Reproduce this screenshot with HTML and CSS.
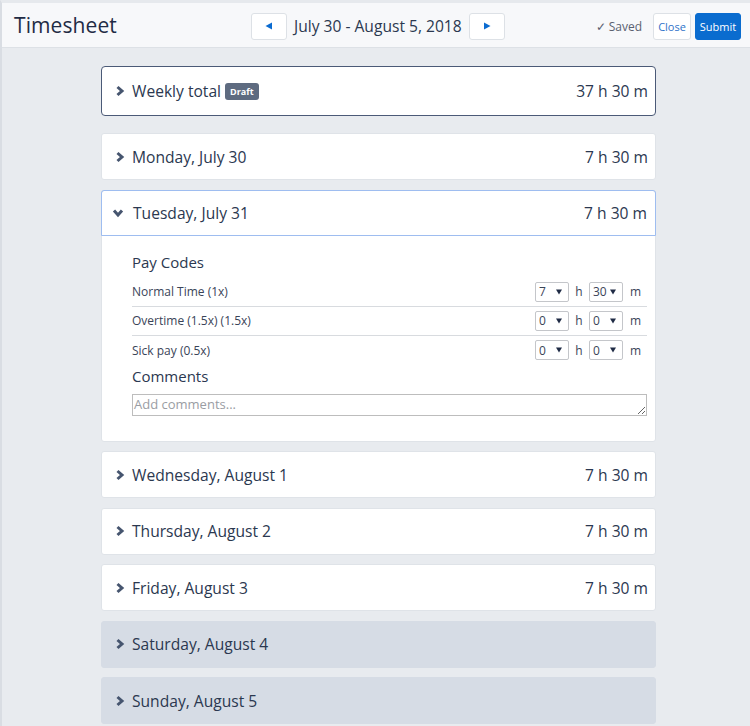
FILE: index.html
```html
<!DOCTYPE html>
<html lang="en">
<head>
<meta charset="utf-8">
<title>Timesheet</title>
<link rel="stylesheet" href="styles.css">
</head>
<body>
<div class="frame">
  <header class="topbar">
    <h1 class="title">Timesheet</h1>
    <div class="datenav">
      <button class="navbtn" aria-label="Previous week"><svg width="8" height="8" viewBox="0 0 8 8"><path d="M7 0.5 L0.5 4 L7 7.5 Z" fill="#0b6bd0"/></svg></button>
      <span class="range">July 30 - August 5, 2018</span>
      <button class="navbtn" aria-label="Next week"><svg width="8" height="8" viewBox="0 0 8 8"><path d="M1 0.5 L7.5 4 L1 7.5 Z" fill="#0b6bd0"/></svg></button>
    </div>
    <div class="actions">
      <span class="saved">✓ Saved</span>
      <button class="btn btn-close">Close</button>
      <button class="btn btn-submit">Submit</button>
    </div>
  </header>

  <main class="list">
    <section class="card card-total">
      <div class="card-head">
        <svg class="chev" width="10" height="12" viewBox="0 0 10 12"><path d="M2.5 2 L7 6 L2.5 10" fill="none" stroke="#46556f" stroke-width="3"/></svg>
        <span class="day">Weekly total</span><span class="badge">Draft</span>
        <span class="hours">37 h 30 m</span>
      </div>
    </section>

    <section class="card">
      <div class="card-head">
        <svg class="chev" width="10" height="12" viewBox="0 0 10 12"><path d="M2.5 2 L7 6 L2.5 10" fill="none" stroke="#46556f" stroke-width="3"/></svg>
        <span class="day">Monday, July 30</span>
        <span class="hours">7 h 30 m</span>
      </div>
    </section>

    <section class="card card-open">
      <div class="card-head head-open">
        <svg class="chev chev-down" width="12" height="10" viewBox="0 0 12 10"><path d="M2 2.5 L6 7 L10 2.5" fill="none" stroke="#46556f" stroke-width="3"/></svg>
        <span class="day">Tuesday, July 31</span>
        <span class="hours">7 h 30 m</span>
      </div>
      <div class="card-body">
        <h2 class="sub">Pay Codes</h2>
        <div class="rows">
          <div class="row">
            <span class="code">Normal Time (1x)</span>
            <span class="sel"><span>7</span><svg width="6" height="6" viewBox="0 0 6 6"><path d="M0 0.5 H6 L3 5.5 Z" fill="#1f2b45"/></svg></span><span class="unit">h</span>
            <span class="sel"><span>30</span><svg width="6" height="6" viewBox="0 0 6 6"><path d="M0 0.5 H6 L3 5.5 Z" fill="#1f2b45"/></svg></span><span class="unit unit-m">m</span>
          </div>
          <div class="row">
            <span class="code">Overtime (1.5x) (1.5x)</span>
            <span class="sel"><span>0</span><svg width="6" height="6" viewBox="0 0 6 6"><path d="M0 0.5 H6 L3 5.5 Z" fill="#1f2b45"/></svg></span><span class="unit">h</span>
            <span class="sel"><span>0</span><svg width="6" height="6" viewBox="0 0 6 6"><path d="M0 0.5 H6 L3 5.5 Z" fill="#1f2b45"/></svg></span><span class="unit unit-m">m</span>
          </div>
          <div class="row last">
            <span class="code">Sick pay (0.5x)</span>
            <span class="sel"><span>0</span><svg width="6" height="6" viewBox="0 0 6 6"><path d="M0 0.5 H6 L3 5.5 Z" fill="#1f2b45"/></svg></span><span class="unit">h</span>
            <span class="sel"><span>0</span><svg width="6" height="6" viewBox="0 0 6 6"><path d="M0 0.5 H6 L3 5.5 Z" fill="#1f2b45"/></svg></span><span class="unit unit-m">m</span>
          </div>
        </div>
        <h2 class="sub sub-comments">Comments</h2>
        <textarea class="comments" placeholder="Add comments..."></textarea>
      </div>
    </section>

    <section class="card">
      <div class="card-head">
        <svg class="chev" width="10" height="12" viewBox="0 0 10 12"><path d="M2.5 2 L7 6 L2.5 10" fill="none" stroke="#46556f" stroke-width="3"/></svg>
        <span class="day">Wednesday, August 1</span>
        <span class="hours">7 h 30 m</span>
      </div>
    </section>

    <section class="card">
      <div class="card-head">
        <svg class="chev" width="10" height="12" viewBox="0 0 10 12"><path d="M2.5 2 L7 6 L2.5 10" fill="none" stroke="#46556f" stroke-width="3"/></svg>
        <span class="day">Thursday, August 2</span>
        <span class="hours">7 h 30 m</span>
      </div>
    </section>

    <section class="card">
      <div class="card-head">
        <svg class="chev" width="10" height="12" viewBox="0 0 10 12"><path d="M2.5 2 L7 6 L2.5 10" fill="none" stroke="#46556f" stroke-width="3"/></svg>
        <span class="day">Friday, August 3</span>
        <span class="hours">7 h 30 m</span>
      </div>
    </section>

    <section class="card card-off">
      <div class="card-head">
        <svg class="chev" width="10" height="12" viewBox="0 0 10 12"><path d="M2.5 2 L7 6 L2.5 10" fill="none" stroke="#46556f" stroke-width="3"/></svg>
        <span class="day">Saturday, August 4</span>
      </div>
    </section>

    <section class="card card-off">
      <div class="card-head">
        <svg class="chev" width="10" height="12" viewBox="0 0 10 12"><path d="M2.5 2 L7 6 L2.5 10" fill="none" stroke="#46556f" stroke-width="3"/></svg>
        <span class="day">Sunday, August 5</span>
      </div>
    </section>
  </main>
</div>
</body>
</html>
```

FILE: styles.css
```css
* { box-sizing: border-box; }

html, body {
  margin: 0;
  padding: 0;
  height: 100%;
}

body {
  font-family: "Open Sans", "Noto Sans", "Liberation Sans", sans-serif;
  background: #e8ebef;
  color: #2b3850;
  overflow: hidden;
}

.frame {
  min-height: 100%;
  border-left: 2px solid #d9dde3;
  border-top: 3px solid #e6e9ed;
  background: #e8ebef;
}

.topbar {
  height: 45px;
  background: #f7f8fa;
  border-bottom: 1px solid #dde1e6;
  display: flex;
  align-items: center;
  padding: 0 9px 0 12px;
}

.title {
  margin: 0;
  font-size: 21px;
  font-weight: 400;
  color: #1f2b45;
  width: 237px;
  letter-spacing: 0.1px;
}

.datenav {
  display: flex;
  align-items: center;
  gap: 7px;
  margin-top: 2px;
}

.navbtn {
  width: 36px;
  height: 27px;
  background: #fff;
  border: 1px solid #dde1e6;
  border-radius: 3px;
  display: flex;
  align-items: center;
  justify-content: center;
  padding: 0;
}

.range {
  font-size: 15.6px;
  color: #2b3850;
  padding: 0;
}

.actions {
  margin-left: auto;
  display: flex;
  align-items: center;
  margin-top: 2px;
}

.saved {
  font-size: 12px;
  color: #5a6170;
  margin-right: 11px;
}

.btn {
  height: 27px;
  border-radius: 3px;
  font-family: inherit;
  font-size: 11px;
  padding: 0 3px;
  border: 1px solid #dde1e6;
}

.btn-close {
  background: #fff;
  color: #2f72c9;
  margin-right: 4px;
  width: 38px;
}

.btn-submit {
  background: #0a6ccf;
  border-color: #0a6ccf;
  color: #fff;
  width: 46px;
}

.list {
  width: 555px;
  margin: 18px 0 0 99px;
  display: flex;
  flex-direction: column;
  gap: 9.5px;
}

.card {
  background: #fff;
  border: 1px solid #dfe3e8;
  border-radius: 3px;
}

.card-head {
  display: flex;
  align-items: center;
  height: 45px;
  padding: 0 7px 0 13px;
  font-size: 15.6px;
  color: #2b3850;
}

.chev {
  margin-right: 7px;
  flex: none;
}

.chev-down {
  margin-left: -4px;
  margin-right: 9px;
}

.day {
  flex: none;
}

.hours {
  margin-left: auto;
}

.card-total {
  border-color: #4b5a77;
  border-radius: 4px;
  margin-bottom: 7.5px;
}

.card-total .card-head {
  height: 48px;
}

.badge {
  background: #5e6b80;
  color: #fff;
  font-size: 9px;
  font-weight: 700;
  border-radius: 3px;
  padding: 2px 5px;
  margin-left: 4px;
  line-height: 13px;
}

.card-open {
  border-color: #dfe3e8;
}

.head-open {
  border: 1px solid #9ebdf0;
  margin: -1px -1px 0 -1px;
  height: 46px;
  padding-left: 14px;
  padding-right: 8px;
  border-radius: 3px 3px 0 0;
}

.card-body {
  padding: 15px 8px 25px 30px;
}

.sub {
  margin: 0;
  font-size: 15px;
  font-weight: 400;
  color: #2b3850;
  line-height: 22px;
}

.rows {
  margin-top: 5px;
}

.row {
  display: flex;
  align-items: center;
  height: 29px;
  border-bottom: 1px solid #d8dbdf;
  padding-right: 0;
  font-size: 12px;
  color: #3a4458;
}

.row.last {
  border-bottom: none;
}

.code {
  margin-right: auto;
}

.sel {
  width: 34px;
  height: 20px;
  border: 1px solid #c4c6ca;
  border-radius: 2px;
  display: flex;
  align-items: center;
  justify-content: space-between;
  padding: 0 6px 0 3px;
  font-size: 12px;
  color: #3a4458;
  background: #fff;
}

.unit {
  width: 20px;
  text-align: center;
  font-size: 12px;
  color: #3a4458;
}

.unit-m {
  width: 24px;
  text-align: left;
  padding-left: 7px;
}

.sub-comments {
  margin-top: 0;
}

.comments {
  display: block;
  width: 100%;
  height: 22px;
  margin-top: 7px;
  border: 1px solid #bdbdbd;
  border-radius: 0;
  font-family: inherit;
  font-size: 13px;
  padding: 0 1px;
  line-height: 19px;
  color: #3a4458;
}

.comments::placeholder {
  color: #9a9da3;
}

.card-off {
  background: #d6dce5;
  border-color: #d6dce5;
}
```
